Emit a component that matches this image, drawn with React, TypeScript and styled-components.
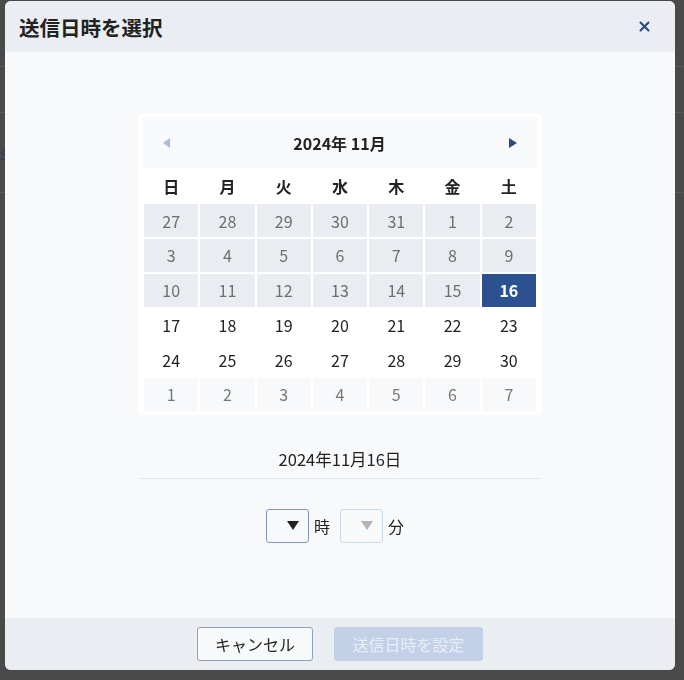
import React from "react";
import styled, { createGlobalStyle, css } from "styled-components";

const GlobalStyle = createGlobalStyle`
  html, body {
    margin: 0;
    padding: 0;
    background: #4a4a4a;
    font-family: "Noto Sans CJK JP", "Noto Sans", sans-serif;
  }
  * { box-sizing: border-box; }
`;

type DayKind = "past" | "current" | "next" | "selected";

const WEEKDAYS = ["日", "月", "火", "水", "木", "金", "土"];

const DAYS: { n: number; kind: DayKind }[] = [
  ...[27, 28, 29, 30, 31].map((n) => ({ n, kind: "past" as DayKind })),
  ...Array.from({ length: 15 }, (_, i) => ({ n: i + 1, kind: "past" as DayKind })),
  { n: 16, kind: "selected" },
  ...Array.from({ length: 14 }, (_, i) => ({ n: i + 17, kind: "current" as DayKind })),
  ...Array.from({ length: 7 }, (_, i) => ({ n: i + 1, kind: "next" as DayKind })),
];

const App = () => {
  return (
    <>
      <GlobalStyle />
      <Page>
        <PageRow $h={67} />
        <PageRow $h={46} />
        <PageRow $h={80}>
          <Faint $blue>s</Faint>
        </PageRow>
      </Page>
      <Modal>
        <Header>
          <Title>送信日時を選択</Title>
          <CloseButton aria-label="close">
            <svg width="11" height="11" viewBox="0 0 11 11">
              <path d="M1.5 1.5 L9.5 9.5 M9.5 1.5 L1.5 9.5" stroke="#2c4a82" strokeWidth="2" strokeLinecap="round" />
            </svg>
          </CloseButton>
        </Header>
        <Body>
          <Calendar>
            <CalHeader>
              <NavArrow $dir="left" $active={false} />
              <MonthTitle>2024年 11月</MonthTitle>
              <NavArrow $dir="right" $active />
            </CalHeader>
            <WeekRow>
              {WEEKDAYS.map((w) => (
                <WeekCell key={w}>{w}</WeekCell>
              ))}
            </WeekRow>
            <DayGrid>
              {DAYS.map((d, i) => (
                <DayCell key={i} $kind={d.kind}>
                  {d.n}
                </DayCell>
              ))}
            </DayGrid>
          </Calendar>
          <DateLabel>2024年11月16日</DateLabel>
          <TimeRow>
            <SelectBox $enabled>
              <Caret $enabled />
            </SelectBox>
            <Unit>時</Unit>
            <SelectBox $enabled={false}>
              <Caret $enabled={false} />
            </SelectBox>
            <Unit>分</Unit>
          </TimeRow>
        </Body>
        <Footer>
          <CancelButton>キャンセル</CancelButton>
          <ConfirmButton disabled>送信日時を設定</ConfirmButton>
        </Footer>
      </Modal>
    </>
  );
};

export default App;

const Page = styled.div`
  height: 680px;
  display: flex;
  flex-direction: column;
  background: #4a4a4a;
`;

const PageRow = styled.div<{ $h: number }>`
  height: ${(p) => p.$h}px;
  border-bottom: 1px solid #575757;
  display: flex;
  align-items: center;
`;

const Faint = styled.span<{ $blue?: boolean }>`
  font-size: 16px;
  color: ${(p) => (p.$blue ? "#2a3d63" : "#2e2e2e")};
`;

const Modal = styled.div`
  position: fixed;
  left: 5px;
  top: 1px;
  width: 670px;
  height: 669px;
  border-radius: 6px;
  overflow: hidden;
  display: flex;
  flex-direction: column;
  background: #f7f9fb;
`;

const Header = styled.div`
  height: 51px;
  flex: none;
  background: #eaedf1;
  display: flex;
  align-items: center;
  justify-content: space-between;
  padding: 0 24px 0 14px;
`;

const Title = styled.h2`
  margin: 0;
  font-size: 20.5px;
  font-weight: 700;
  color: #222;
`;

const CloseButton = styled.button`
  border: none;
  background: none;
  padding: 0;
  width: 14px;
  height: 14px;
  display: flex;
  align-items: center;
  justify-content: center;
  cursor: pointer;
`;

const Body = styled.div`
  flex: 1;
  display: flex;
  flex-direction: column;
  align-items: center;
  padding-top: 62px;
`;

const Calendar = styled.div`
  width: 404px;
  background: #fff;
  border-radius: 4px;
  padding: 3px 5px 4px;
`;

const CalHeader = styled.div`
  height: 51px;
  background: #f7f9fb;
  display: flex;
  align-items: center;
  justify-content: space-between;
  padding: 0 20px;
`;

const NavArrow = styled.span<{ $dir: "left" | "right"; $active: boolean }>`
  width: 0;
  height: 0;
  border-top: 5px solid transparent;
  border-bottom: 5px solid transparent;
  ${(p) =>
    p.$dir === "left"
      ? css`
          border-right: 7px solid ${p.$active ? "#2c4a82" : "#a9bcd8"};
        `
      : css`
          border-left: 8px solid ${p.$active ? "#2c4a82" : "#a9bcd8"};
        `}
`;

const MonthTitle = styled.div`
  font-size: 16px;
  font-weight: 700;
  color: #222;
`;

const WeekRow = styled.div`
  display: grid;
  grid-template-columns: repeat(7, 1fr);
  gap: 2px;
  padding: 0 1px;
  height: 36px;
  align-items: center;
`;

const WeekCell = styled.div`
  text-align: center;
  font-size: 16px;
  font-weight: 700;
  color: #222;
`;

const DayGrid = styled.div`
  display: grid;
  grid-template-columns: repeat(7, 1fr);
  grid-auto-rows: 33px;
  gap: 1.8px 2px;
  padding: 0 1px;
`;

const dayStyles: Record<DayKind, ReturnType<typeof css>> = {
  past: css`
    background: #e9ecf1;
    color: #6e6e6e;
  `,
  current: css`
    background: #fff;
    color: #222;
  `,
  next: css`
    background: #f7f9fb;
    color: #777;
  `,
  selected: css`
    background: #2c5190;
    color: #fff;
    font-weight: 700;
  `,
};

const DayCell = styled.div<{ $kind: DayKind }>`
  display: flex;
  align-items: center;
  justify-content: center;
  font-size: 16px;
  ${(p) => dayStyles[p.$kind]}
`;

const DateLabel = styled.div`
  width: 404px;
  margin-top: 32px;
  padding-bottom: 7px;
  text-align: center;
  font-size: 16.5px;
  color: #222;
  border-bottom: 1px solid #e3e8ee;
`;

const TimeRow = styled.div`
  margin-top: 30px;
  display: flex;
  align-items: center;
`;

const SelectBox = styled.div<{ $enabled: boolean }>`
  width: 43px;
  height: 34px;
  border-radius: 3px;
  border: 1px solid ${(p) => (p.$enabled ? "#7e97b8" : "#c9daec")};
  background: #f7f9fb;
  display: flex;
  align-items: center;
  justify-content: flex-end;
  padding-right: 9px;
`;

const Caret = styled.span<{ $enabled: boolean }>`
  width: 0;
  height: 0;
  border-left: 6px solid transparent;
  border-right: 6px solid transparent;
  border-top: 9px solid ${(p) => (p.$enabled ? "#222" : "#b3b3b3")};
`;

const Unit = styled.span`
  font-size: 16px;
  color: #222;
  margin: 0 10px 0 5px;
`;

const Footer = styled.div`
  height: 52px;
  flex: none;
  background: #eaedf1;
  display: flex;
  align-items: center;
  justify-content: center;
  gap: 21px;
`;

const buttonBase = css`
  height: 34px;
  border-radius: 3px;
  font-family: "Noto Sans CJK JP", "Noto Sans", sans-serif;
  font-size: 16px;
  padding: 0;
`;

const CancelButton = styled.button`
  ${buttonBase}
  width: 116px;
  background: #f7f9fb;
  border: 1px solid #8aa3c2;
  color: #222;
`;

const ConfirmButton = styled.button`
  ${buttonBase}
  width: 149px;
  background: #c3d1e8;
  border: none;
  color: #e8eef7;
`;
